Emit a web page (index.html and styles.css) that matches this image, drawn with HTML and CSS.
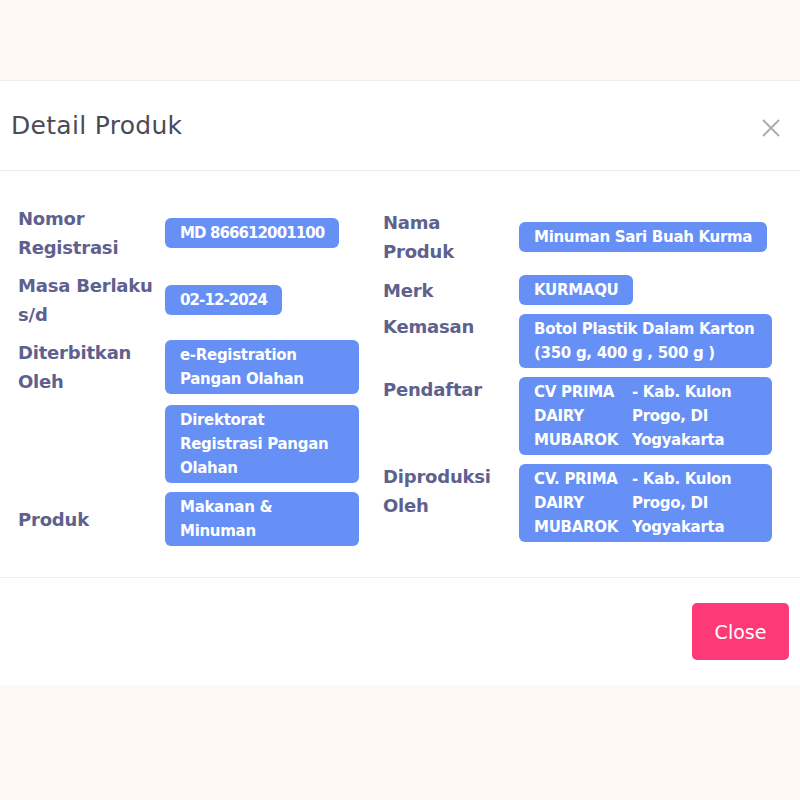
FILE: index.html
```html
<!DOCTYPE html>
<html lang="id">
<head>
    <meta charset="UTF-8">
    <meta name="viewport" content="width=device-width, initial-scale=1.0">
    <title>Detail Produk</title>
    <link rel="stylesheet" href="styles.css">
</head>
<body>
    <div class="backdrop">
        <div class="modal">
            <!-- Header -->
            <div class="modal-header">
                <h2 class="modal-title">Detail Produk</h2>
                <button class="close-x" aria-label="Close">
                    <svg width="18" height="18" viewBox="0 0 18 18">
                        <path d="M1 1 L17 17 M17 1 L1 17" stroke="#a9a9b0" stroke-width="1.8" fill="none"/>
                    </svg>
                </button>
            </div>

            <!-- Body -->
            <div class="modal-body">
                <div class="col col-left">
                    <div class="row">
                        <div class="label">Nomor Registrasi</div>
                        <div class="value"><span class="badge tight">MD 866612001100</span></div>
                    </div>
                    <div class="row">
                        <div class="label">Masa Berlaku s/d</div>
                        <div class="value"><span class="badge tight">02-12-2024</span></div>
                    </div>
                    <div class="row">
                        <div class="label">Diterbitkan Oleh</div>
                        <div class="value"><span class="badge full">e-Registration Pangan Olahan</span></div>
                    </div>
                    <div class="row">
                        <div class="label"></div>
                        <div class="value"><span class="badge full">Direktorat Registrasi Pangan Olahan</span></div>
                    </div>
                    <div class="row">
                        <div class="label">Produk</div>
                        <div class="value"><span class="badge full">Makanan &amp; Minuman</span></div>
                    </div>
                </div>

                <div class="col col-right">
                    <div class="row">
                        <div class="label">Nama Produk</div>
                        <div class="value"><span class="badge">Minuman Sari Buah Kurma</span></div>
                    </div>
                    <div class="row">
                        <div class="label">Merk</div>
                        <div class="value"><span class="badge">KURMAQU</span></div>
                    </div>
                    <div class="row top">
                        <div class="label">Kemasan</div>
                        <div class="value"><span class="badge full">Botol Plastik Dalam Karton (350 g, 400 g , 500 g )</span></div>
                    </div>
                    <div class="row top">
                        <div class="label">Pendaftar</div>
                        <div class="value">
                            <div class="badge full company">
                                <span>CV PRIMA DAIRY MUBAROK</span>
                                <span>- Kab. Kulon Progo, DI Yogyakarta</span>
                            </div>
                        </div>
                    </div>
                    <div class="row top">
                        <div class="label">Diproduksi Oleh</div>
                        <div class="value">
                            <div class="badge full company">
                                <span>CV. PRIMA DAIRY MUBAROK</span>
                                <span>- Kab. Kulon Progo, DI Yogyakarta</span>
                            </div>
                        </div>
                    </div>
                </div>
            </div>

            <!-- Footer -->
            <div class="modal-footer">
                <button class="btn-close">Close</button>
            </div>
        </div>
    </div>
</body>
</html>
```

FILE: styles.css
```css
* {
    margin: 0;
    padding: 0;
    box-sizing: border-box;
}

body {
    background-color: #fdf8f1;
    font-family: 'DejaVu Sans', sans-serif;
}

.backdrop {
    padding-top: 80px;
    min-height: 800px;
}

.modal {
    background-color: #fff;
    border-top: 1px solid #f1ede8;
}

.modal-header {
    display: flex;
    align-items: center;
    justify-content: space-between;
    height: 90px;
    padding: 0 20px 0 11px;
    border-bottom: 1px solid #ececef;
}

.modal-title {
    font-size: 25px;
    font-weight: 400;
    color: #4b4b57;
    letter-spacing: 0.3px;
}

.close-x {
    border: none;
    background: none;
    display: flex;
    padding-top: 4px;
}

.modal-body {
    display: grid;
    grid-template-columns: 341px 389px;
    column-gap: 24px;
    padding: 33px 28px 31px 18px;
    border-bottom: 1px solid #ececef;
}

.col {
    display: flex;
    flex-direction: column;
    gap: 9px;
}

.col-right {
    padding-top: 4px;
}

.row {
    display: flex;
    align-items: center;
}

.row.top {
    align-items: flex-start;
}

.label {
    flex: none;
    font-size: 18px;
    font-weight: 700;
    line-height: 29px;
    color: #5e618e;
    letter-spacing: -0.2px;
}

.col-left .label {
    width: 147px;
    padding-right: 4px;
}

.col-right .label {
    width: 136px;
    padding-right: 12px;
}

.row.top .label {
    margin-top: -2px;
}

.value {
    display: flex;
    flex-direction: column;
    align-items: flex-start;
}

.col-left .value {
    width: 194px;
}

.col-right .value {
    width: 253px;
}

.badge {
    display: inline-block;
    background-color: #6790f6;
    color: #fff;
    font-size: 15px;
    font-weight: 700;
    line-height: 24px;
    padding: 3px 15px;
    border-radius: 6px;
    letter-spacing: -0.3px;
}

.badge.tight {
    letter-spacing: -0.9px;
}

.badge.full {
    width: 100%;
}

.company {
    display: grid;
    grid-template-columns: 98px 1fr;
}

.modal-footer {
    display: flex;
    justify-content: flex-end;
    padding: 25px 11px 25px;
}

.btn-close {
    width: 97px;
    height: 57px;
    border: none;
    border-radius: 5px;
    background-color: #fd3a77;
    color: #fff;
    font-family: 'DejaVu Sans', sans-serif;
    font-size: 19px;
    cursor: pointer;
}
```
